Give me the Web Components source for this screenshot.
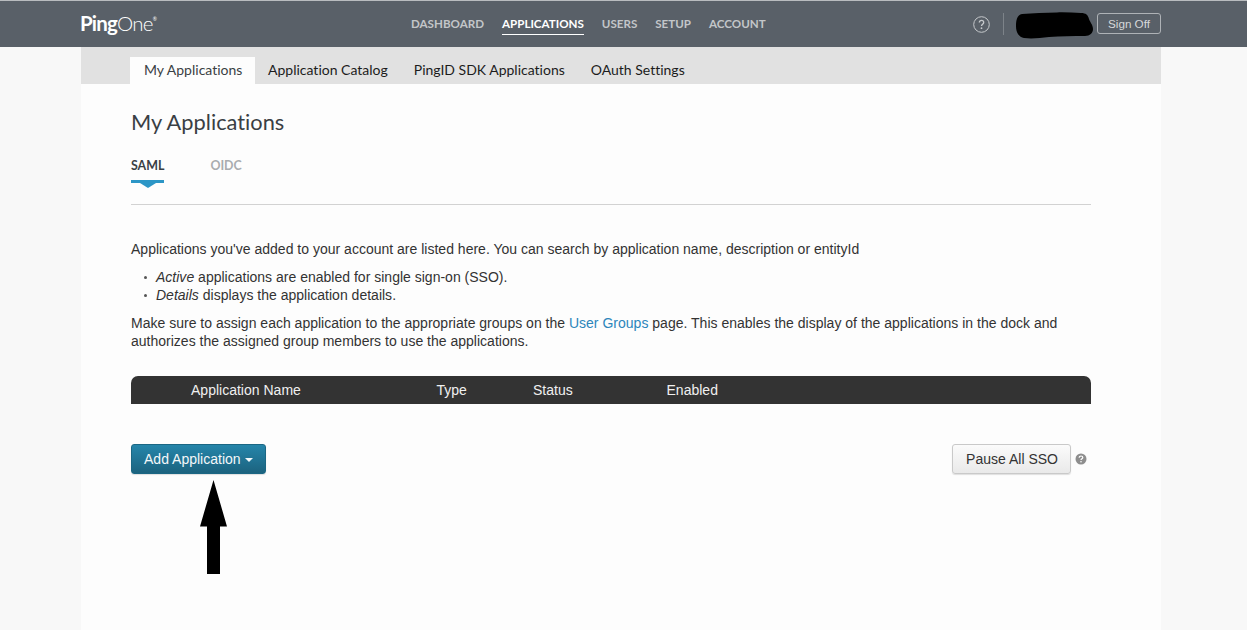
<!DOCTYPE html>
<html lang="en">
<head>
<meta charset="utf-8">
<title>PingOne</title>
<style>
  html, body { margin: 0; padding: 0; background: #f8f8f8; }
  body { height: 630px; overflow: hidden; font-family: "Liberation Sans", Arial, sans-serif; font-variant-ligatures: none; }
</style>
</head>
<body>
<app-page>
  <top-bar slot="top"></top-bar>
  <sub-nav></sub-nav>
  <page-content></page-content>
</app-page>

<script>
class AppPage extends HTMLElement {
  constructor() {
    super();
    this.attachShadow({mode: 'open'}).innerHTML = `
    <style>
    :host { display: block; height: 630px; box-sizing: border-box; border-top: 1px solid #b9bcbf; }
    main { width: 1080px; height: 583px; margin: 0 0 0 81px; background: #fdfdfd; }
    </style>
    <slot name="top"></slot>
    <main><slot></slot></main>
    `;
  }
}

class TopBar extends HTMLElement {
  constructor() {
    super();
    this.attachShadow({mode: 'open'}).innerHTML = `
    <style>
    :host { display: flex; align-items: center; height: 46px; padding: 0 86px 0 81px; background: #596068; font-family: Lato, sans-serif; }
    .logo { width: 331px; margin: -2px 0 0 -1px; color: #fff; font-size: 20.500px; letter-spacing: -0.8px; line-height: 46px; }
    .logo b { font-weight: 700; }
    .logo span { font-weight: 300; }
    .logo sup { font-size: 5px; vertical-align: 10px; line-height: 0; letter-spacing: 0; }
    nav { display: flex; align-self: flex-start; gap: 18px; margin-top: 11px; font-size: 11.600px; font-weight: 700; color: #c3c6c9; }
    nav a { box-sizing: border-box; height: 23px; line-height: 23px; }
    nav a.on { color: #fff; border-bottom: 1px solid #fff; }
    .right { display: flex; align-items: center; margin-left: auto; }
    .help { display: block; margin-right: 13px; }
    .sep { width: 1px; height: 22px; margin-top: -1px; background: #7d8389; margin-right: 11px; }
    .redact { display: block; margin: 3px 3px 0 0; }
    .signoff { box-sizing: border-box; width: 64px; height: 21px; margin-top: -1px; border: 1px solid #aeb2b6; border-radius: 3px; color: #d6d8da; font: 11.700px/19px "Liberation Sans", sans-serif; text-align: center; }
    </style>
    <div class="logo"><b>Ping</b><span>One</span><sup>®</sup></div>
    <nav>
      <a>DASHBOARD</a>
      <a class="on">APPLICATIONS</a>
      <a>USERS</a>
      <a>SETUP</a>
      <a>ACCOUNT</a>
    </nav>
    <div class="right">
      <svg class="help" width="17" height="17" viewBox="0 0 17 17"><circle cx="8.500" cy="8.500" r="7.800" fill="none" stroke="#c6c9cc" stroke-width="1"/><path d="M6.300 6.600c0-1.400 1-2.200 2.200-2.200s2.200.8 2.200 2c0 1.700-2.200 1.800-2.200 3.500" fill="none" stroke="#c6c9cc" stroke-width="1.300"/><circle cx="8.500" cy="12.200" r=".9" fill="#c6c9cc"/></svg>
      <div class="sep"></div>
      <svg class="redact" width="79" height="27" viewBox="0 0 79 27"><path d="M7 2C18 1 30 1 42 0.500 50 0 58 1 66 1c5 0 7 2 8 6 1 3 4 6 4 10 0 4-3 7-8 7-12 0-24 0-36 1-9 1-17 2-25 1C4 25 1 21 1 14 1 8 2 3 7 2z" fill="#000"/></svg>
      <div class="signoff">Sign Off</div>
    </div>
    `;
  }
}

class SubNav extends HTMLElement {
  constructor() {
    super();
    this.attachShadow({mode: 'open'}).innerHTML = `
    <style>
    :host { display: flex; align-items: flex-end; height: 37px; padding-left: 49px; background: #e1e1e1; font-family: Lato, sans-serif; font-size: 14px; font-variant-ligatures: none; color: #1c1c1c; }
    a { display: block; height: 27px; line-height: 25px; padding: 0 13px; white-space: nowrap; }
    a.on { box-sizing: border-box; width: 125px; padding: 0 14px; background: #fdfdfd; color: #3a3f44; }
    </style>
    <a class="on">My Applications</a>
    <a>Application Catalog</a>
    <a>PingID SDK Applications</a>
    <a>OAuth Settings</a>
    `;
  }
}

class ProtocolTabs extends HTMLElement {
  constructor() {
    super();
    this.attachShadow({mode: 'open'}).innerHTML = `
    <style>
    :host { display: flex; gap: 46px; height: 47px; border-bottom: 1px solid #d2d2d2; font-family: Lato, sans-serif; font-size: 12.400px; font-weight: 700; }
    a { position: relative; height: 23px; line-height: 17px; color: #a9acaf; }
    a.on { color: #3a3f44; border-bottom: 3px solid #2c96c6; }
    a.on::after { content: ''; position: absolute; left: 50%; top: 100%; margin-left: -8px; margin-top: 3px; border: 8px solid transparent; border-top: 5px solid #2c96c6; border-bottom: 0; }
    </style>
    <a class="on">SAML</a>
    <a>OIDC</a>
    `;
  }
}

class AppTable extends HTMLElement {
  constructor() {
    super();
    this.attachShadow({mode: 'open'}).innerHTML = `
    <style>
    :host { display: grid; grid-template-columns: 245.500px 96.500px 133.500px 1fr; height: 28px; padding-left: 60px; align-items: center; background: #333; border-radius: 7px 7px 0 0; color: #f0f0f0; font-size: 14px; }
    </style>
    <span>Application Name</span>
    <span>Type</span>
    <span>Status</span>
    <span>Enabled</span>
    `;
  }
}

class PingButton extends HTMLElement {
  constructor() {
    super();
    this.attachShadow({mode: 'open'}).innerHTML = `
    <style>
    :host { display: inline-block; box-sizing: border-box; height: 30px; line-height: 28px; padding: 0 12px; border: 1px solid #c9c9c9; border-radius: 3px; background: linear-gradient(#fbfbfb, #e9e9e9); color: #333; font-size: 14px; box-shadow: 0 1px 1px rgba(0,0,0,.12); white-space: nowrap; }
    :host([primary]) { border-color: #1b6784; background: linear-gradient(#2585aa, #1c637f); color: #f4f8fa; }
    .caret { display: none; margin-left: 4px; vertical-align: 2px; border: 4px solid transparent; border-top-color: #f4f8fa; border-bottom: 0; }
    :host([primary]) .caret { display: inline-block; }
    </style>
    <slot></slot><span class="caret"></span>
    `;
  }
}

class PageContent extends HTMLElement {
  constructor() {
    super();
    this.attachShadow({mode: 'open'}).innerHTML = `
    <style>
    :host { display: block; position: relative; padding: 0 70px 0 50px; color: #333; font-size: 14px; line-height: 18px; letter-spacing: 0.008px; }
    h1 { margin: 0; padding-top: 25px; height: 42px; font: 400 21.800px/26px Lato, sans-serif; font-variant-ligatures: none; color: #3a3f44; }
    protocol-tabs { margin-top: 6px; }
    p { margin: 0; }
    .intro { margin-top: 35px; }
    ul { margin: 10px 0 0; padding: 0 0 0 25px; list-style: none; }
    li { position: relative; }
    li::before { content: ''; position: absolute; left: -12px; top: 8px; width: 3px; height: 3px; border-radius: 50%; background: #555; }
    .assign { margin-top: 10px; white-space: nowrap; }
    .assign a { color: #2c86bb; }
    app-table { margin-top: 26px; }
    .actions { display: flex; align-items: center; margin-top: 40px; }
    .pause { margin-left: auto; padding-left: 13px; }
    .q { display: block; margin: 0 4px 0 4px; }
    .arrow { position: absolute; left: 119px; top: 396px; display: block; }
    </style>
    <h1>My Applications</h1>
    <protocol-tabs></protocol-tabs>
    <p class="intro">Applications you've added to your account are listed here. You can search by application name, description or entityId</p>
    <ul>
      <li><em>Active</em> applications are enabled for single sign-on (SSO).</li>
      <li><em>Details</em> displays the application details.</li>
    </ul>
    <p class="assign">Make sure to assign each application to the appropriate groups on the <a>User Groups</a> page. This enables the display of the applications in the dock and<br>authorizes the assigned group members to use the applications.</p>
    <app-table></app-table>
    <div class="actions">
      <ping-button primary>Add Application</ping-button>
      <ping-button class="pause">Pause All SSO</ping-button>
      <svg class="q" width="12" height="12" viewBox="0 0 12 12"><circle cx="6" cy="6" r="5.500" fill="#8e8e8e"/><path d="M4.200 4.700c0-1.100.8-1.700 1.800-1.700s1.800.6 1.800 1.500c0 1.300-1.800 1.300-1.800 2.600" fill="none" stroke="#fff" stroke-width="1.200"/><circle cx="6" cy="8.800" r=".8" fill="#fff"/></svg>
    </div>
    <svg class="arrow" width="28" height="94" viewBox="0 0 28 94"><path d="M13.500 0L27 46.500H20V94H7V46.500H0Z" fill="#000"/></svg>
    `;
  }
}

customElements.define('app-page', AppPage);
customElements.define('top-bar', TopBar);
customElements.define('sub-nav', SubNav);
customElements.define('protocol-tabs', ProtocolTabs);
customElements.define('app-table', AppTable);
customElements.define('ping-button', PingButton);
customElements.define('page-content', PageContent);
</script>
</body>
</html>
